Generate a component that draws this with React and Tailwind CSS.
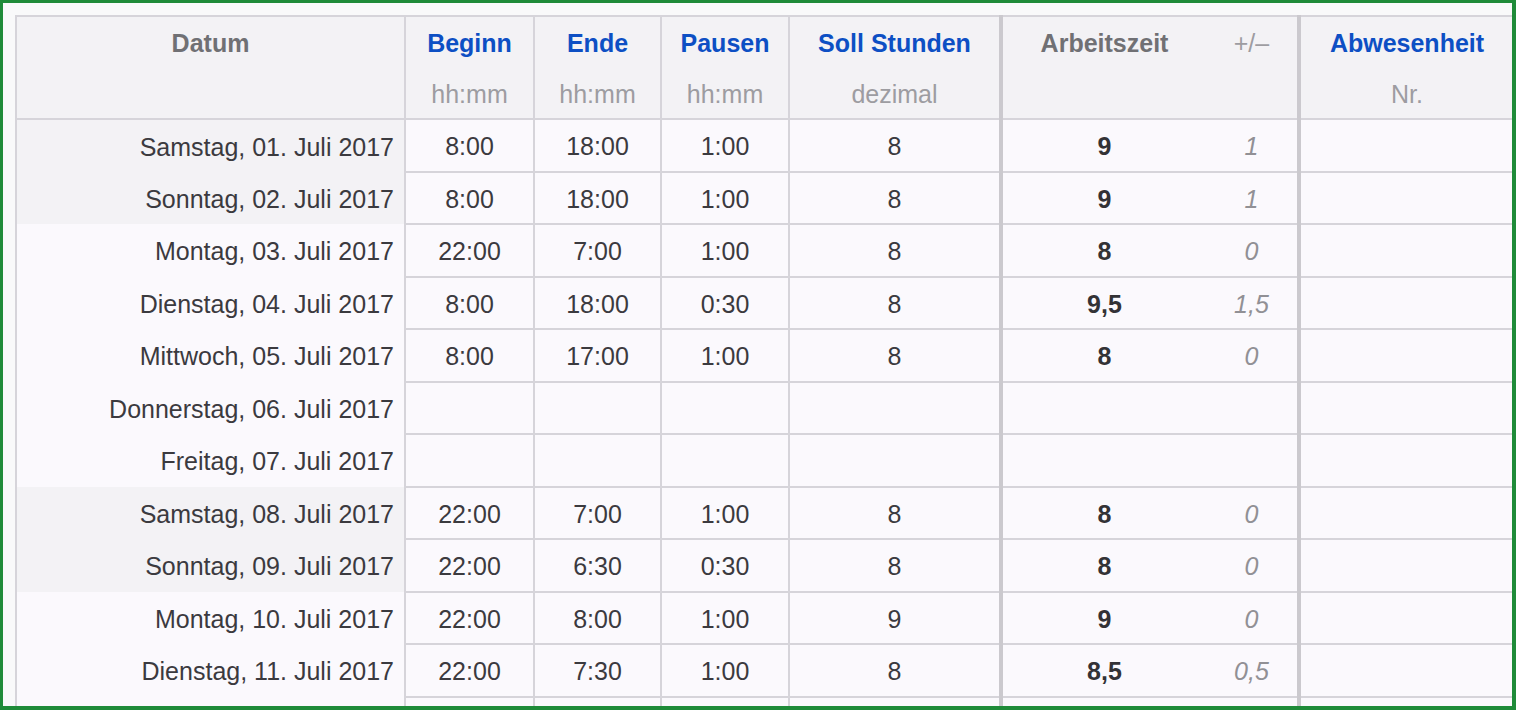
import React from 'react'

const rows = [
  { d: 'Samstag, 01. Juli 2017', we: true, b: '8:00', e: '18:00', p: '1:00', s: '8', a: '9', x: '1' },
  { d: 'Sonntag, 02. Juli 2017', we: true, b: '8:00', e: '18:00', p: '1:00', s: '8', a: '9', x: '1' },
  { d: 'Montag, 03. Juli 2017', b: '22:00', e: '7:00', p: '1:00', s: '8', a: '8', x: '0' },
  { d: 'Dienstag, 04. Juli 2017', b: '8:00', e: '18:00', p: '0:30', s: '8', a: '9,5', x: '1,5' },
  { d: 'Mittwoch, 05. Juli 2017', b: '8:00', e: '17:00', p: '1:00', s: '8', a: '8', x: '0' },
  { d: 'Donnerstag, 06. Juli 2017' },
  { d: 'Freitag, 07. Juli 2017' },
  { d: 'Samstag, 08. Juli 2017', we: true, b: '22:00', e: '7:00', p: '1:00', s: '8', a: '8', x: '0' },
  { d: 'Sonntag, 09. Juli 2017', we: true, b: '22:00', e: '6:30', p: '0:30', s: '8', a: '8', x: '0' },
  { d: 'Montag, 10. Juli 2017', b: '22:00', e: '8:00', p: '1:00', s: '9', a: '9', x: '0' },
  { d: 'Dienstag, 11. Juli 2017', b: '22:00', e: '7:30', p: '1:00', s: '8', a: '8,5', x: '0,5' },
  { d: '' },
]

const cell = 'border-2 border-[#d6d4da] text-center pt-[3px]'
const thick = 'border-l-4 border-l-[#cbc9ce]'

const Head = ({ title, sub, blue, className = '' }) => (
  <th className={`border-2 border-[#d6d4da] text-center ${className} align-top p-0 font-normal`}>
    <div className={`h-[51px] pt-[8px] font-bold ${blue ? 'text-[#0d4fc4]' : 'text-[#707074]'}`}>{title}</div>
    <div className="h-[50px] pt-[8px] text-[#9d9ca1]">{sub}</div>
  </th>
)

export default function App() {
  return (
    <div className="w-[1516px] h-[710px] overflow-hidden border-t-[3px] border-l-[3px] border-r-4 border-b-4 border-[#1f8b39] bg-[#f9f9fa] pl-[12px] pt-[12px] text-[25px] text-[#3b3a3f]" style={{ fontFamily: '"Helvetica Neue", Helvetica, "Liberation Sans", Arial, sans-serif' }}>
      <table className="table-fixed border-collapse w-[1498px]">
        <colgroup>
          <col className="w-[389px]" />
          <col className="w-[129px]" />
          <col className="w-[127px]" />
          <col className="w-[128px]" />
          <col className="w-[212px]" />
          <col className="w-[205px]" />
          <col className="w-[93px]" />
          <col className="w-[215px]" />
        </colgroup>
        <thead className="bg-[#f3f2f5]">
          <tr>
            <Head title="Datum" />
            <Head title="Beginn" sub="hh:mm" blue />
            <Head title="Ende" sub="hh:mm" blue />
            <Head title="Pausen" sub="hh:mm" blue />
            <Head title="Soll Stunden" sub="dezimal" blue />
            <Head title="Arbeitszeit" className={`${thick} border-r-0`} />
            <th className="border-2 border-[#d6d4da] border-l-0 text-center align-top p-0 font-normal">
              <div className="h-[51px] pt-[8px] text-[#9d9ca1]">+/–</div>
            </th>
            <Head title="Abwesenheit" sub="Nr." blue className={thick} />
          </tr>
        </thead>
        <tbody className="bg-[#fbf9fd]">
          {rows.map((r, i) => (
            <tr key={i} className="h-[52.5px]">
              <td className={`border-l-2 border-l-[#d6d4da] border-r-2 border-r-[#d6d4da] text-right pr-[10px] pt-[3px] whitespace-nowrap ${r.we ? 'bg-[#f3f2f5]' : ''}`}>{r.d}</td>
              <td className={cell}>{r.b}</td>
              <td className={cell}>{r.e}</td>
              <td className={cell}>{r.p}</td>
              <td className={cell}>{r.s}</td>
              <td className={`${cell} ${thick} border-r-0 font-bold text-[#333236]`}>{r.a}</td>
              <td className={`${cell} border-l-0 italic text-[#919095]`}>{r.x}</td>
              <td className={`${cell} ${thick}`}></td>
            </tr>
          ))}
        </tbody>
      </table>
    </div>
  )
}
